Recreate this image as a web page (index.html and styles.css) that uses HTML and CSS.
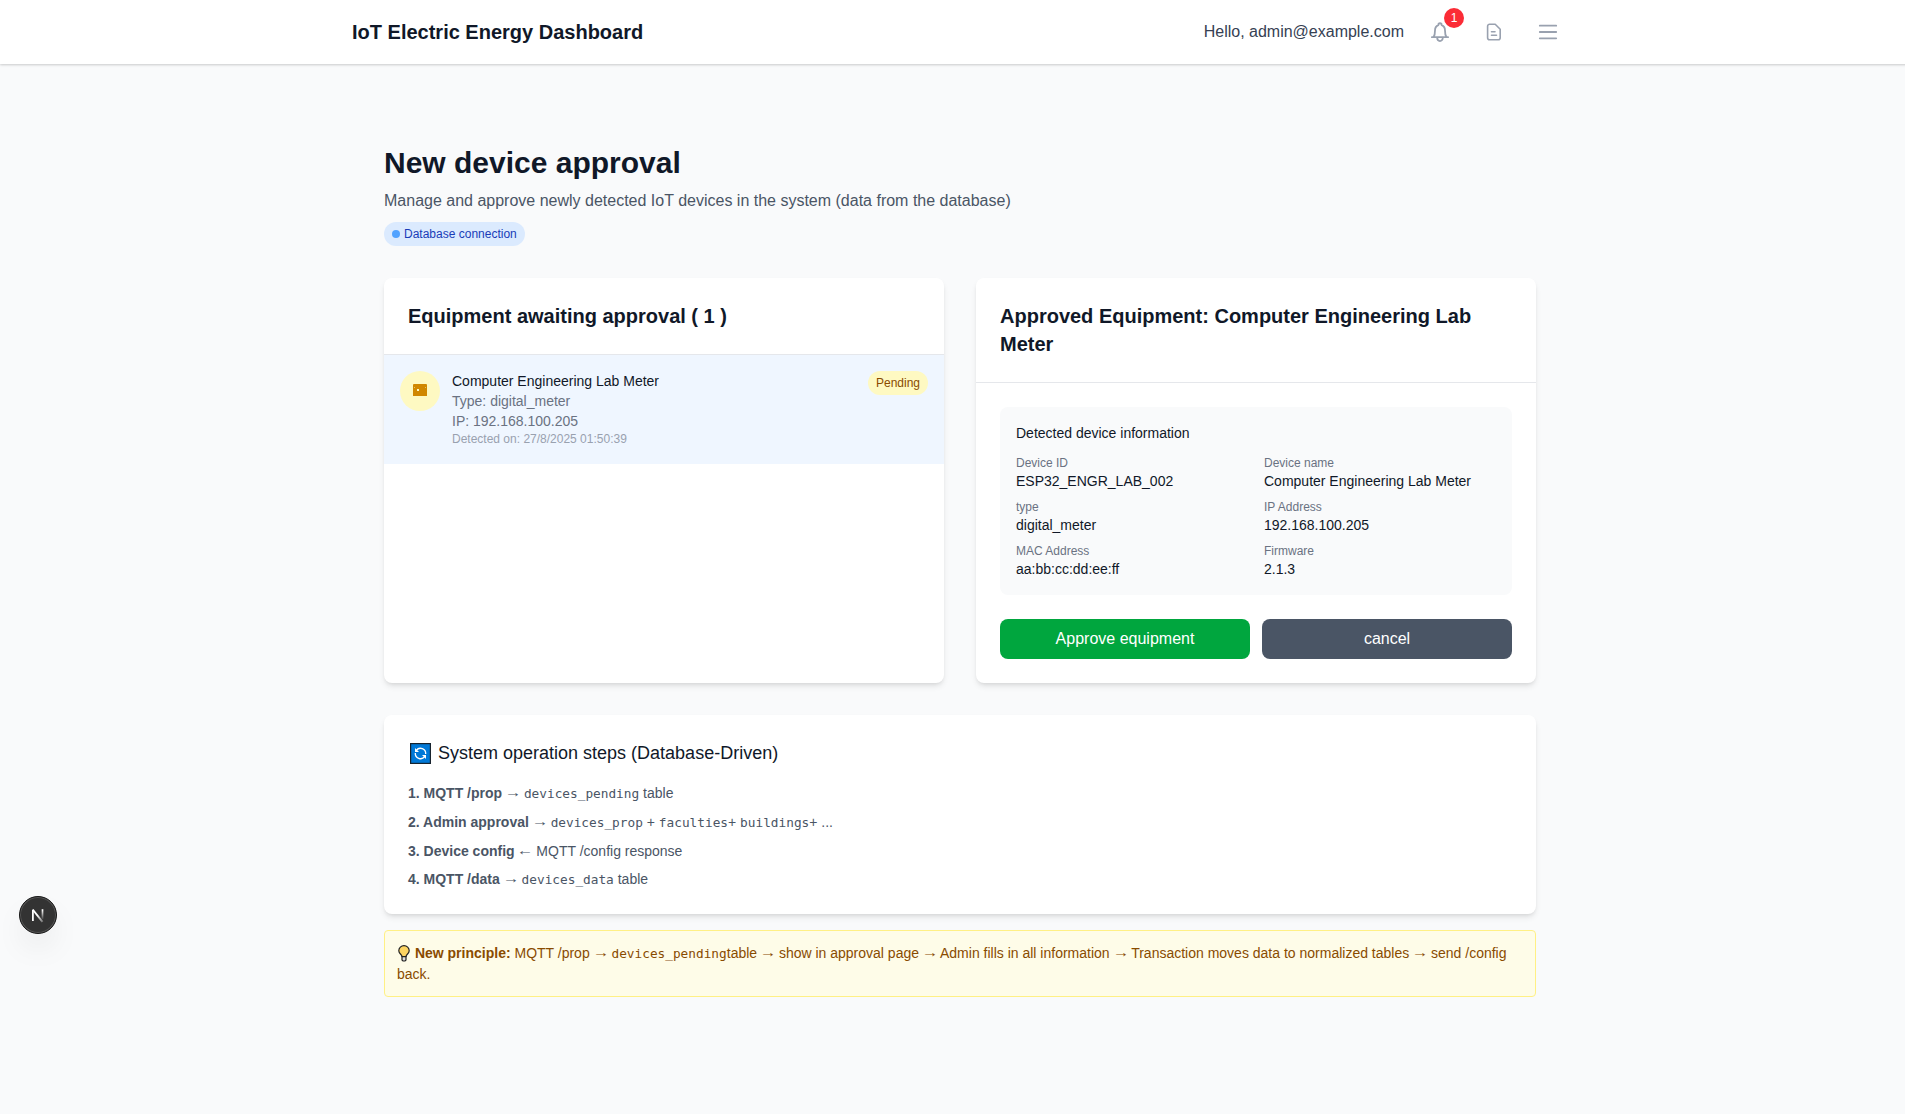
FILE: index.html
```html
<!DOCTYPE html>
<html lang="en">
<head>
<meta charset="utf-8">
<title>New device approval</title>
<link rel="stylesheet" href="styles.css">
</head>
<body>
<header class="topbar">
  <div class="topbar-inner">
    <h1 class="brand">IoT Electric Energy Dashboard</h1>
    <div class="topbar-right">
      <span class="hello">Hello, admin@example.com</span>
      <button class="icon-btn bell" aria-label="Notifications">
        <svg viewBox="0 0 20 20" width="20" height="20" fill="none" stroke="currentColor" stroke-width="1.8" stroke-linecap="round" stroke-linejoin="round"><path d="M1.900 15.200h16.200M3.600 15C4.800 13.200 5 11 5 8.500C5 6 6.300 4 8.300 3.200C8.300.6 11.700.6 11.700 3.200C13.700 4 15 6 15 8.500C15 11 15.200 13.200 16.400 15M7.200 15.800c0 4.300 5.600 4.300 5.600 0"/></svg>
        <span class="count">1</span>
      </button>
      <button class="icon-btn" aria-label="Reports">
        <svg viewBox="0 0 20 20" width="20" height="20" fill="none" stroke="currentColor" stroke-width="1.6" stroke-linecap="round" stroke-linejoin="round"><path d="M5.600 2.200h5.600l5 5v8.600a2 2 0 0 1-2 2H5.600a2 2 0 0 1-2-2V4.200a2 2 0 0 1 2-2zM7.500 9.800h3.500M7.500 13.300h5"/></svg>
      </button>
      <button class="icon-btn" aria-label="Menu">
        <svg viewBox="0 0 20 20" width="20" height="20" fill="none" stroke="currentColor" stroke-width="1.800" stroke-linecap="round"><path d="M1.800 3.700h16.400M1.800 10h16.400M1.800 16.300h16.400"/></svg>
      </button>
    </div>
  </div>
</header>
<main class="page">
  <section class="intro">
    <h2 class="title">New device approval</h2>
    <p class="subtitle">Manage and approve newly detected IoT devices in the system (data from the database)</p>
    <span class="db-badge"><i class="dot"></i>Database connection</span>
  </section>
  <div class="columns">
    <section class="card">
      <div class="card-head"><h3>Equipment awaiting approval ( 1 )</h3></div>
      <div class="device">
        <div class="device-icon"><svg viewBox="0 0 14 12" width="14" height="12"><rect width="14" height="12" fill="#d08700"/><path d="M4 5h2v2H4z" fill="#fef9c2"/><path d="M1 3h1v1H1zM12 3h1v1h-1zM0 0h1v.5H0zM13 0h1v.5h-1z" fill="#e9c25e"/></svg></div>
        <div class="device-text">
          <p class="device-name">Computer Engineering Lab Meter</p>
          <p class="device-meta">Type: digital_meter</p>
          <p class="device-meta">IP: 192.168.100.205</p>
          <p class="device-date">Detected on: 27/8/2025 01:50:39</p>
        </div>
        <span class="pending">Pending</span>
      </div>
    </section>
    <section class="card">
      <div class="card-head"><h3>Approved Equipment: Computer Engineering Lab Meter</h3></div>
      <div class="card-body">
        <div class="info">
          <h4>Detected device information</h4>
          <dl class="info-grid">
            <div><dt>Device ID</dt><dd>ESP32_ENGR_LAB_002</dd></div>
            <div><dt>Device name</dt><dd>Computer Engineering Lab Meter</dd></div>
            <div><dt>type</dt><dd>digital_meter</dd></div>
            <div><dt>IP Address</dt><dd>192.168.100.205</dd></div>
            <div><dt>MAC Address</dt><dd>aa:bb:cc:dd:ee:ff</dd></div>
            <div><dt>Firmware</dt><dd>2.1.3</dd></div>
          </dl>
        </div>
        <div class="actions">
          <button class="btn approve">Approve equipment</button>
          <button class="btn cancel">cancel</button>
        </div>
      </div>
    </section>
  </div>
  <section class="card steps">
    <h3><svg class="sync" viewBox="0 0 21 21" width="21" height="21"><rect x=".6" y=".6" width="19.800" height="19.800" fill="#0078d7" stroke="#17232e" stroke-width="1.200"/><g fill="none" stroke="#fff" stroke-width="1.300"><path d="M6.300 7.300A5.300 5.300 0 0 1 15.700 11M14.700 13.700A5.300 5.300 0 0 1 5.300 10"/></g><path d="M5 5v4h4zM16 16v-4h-4z" fill="#fff"/></svg>System operation steps (Database-Driven)</h3>
    <ol class="step-list">
      <li><b>1. MQTT /prop</b> <span class="arrow">→</span> <code>devices_pending</code> table</li>
      <li><b>2. Admin approval</b> <span class="arrow">→</span> <code>devices_prop</code> + <code>faculties</code>+ <code>buildings</code>+ ...</li>
      <li><b>3. Device config</b> <span class="arrow">←</span> MQTT /config response</li>
      <li><b>4. MQTT /data</b> <span class="arrow">→</span> <code>devices_data</code> table</li>
    </ol>
  </section>
  <p class="principle"><svg class="bulb" viewBox="0 0 12 17" width="12" height="17"><path d="M4 11.500C4 9.500.8 8.700.8 5.700a5.200 5 0 0 1 10.400 0C11.200 8.700 8 9.500 8 11.500z" fill="#fcd462" stroke="#222" stroke-width="1.200"/><path d="M4 11.700h4v3.300l-1 1H5l-1-1z" fill="#ddd" stroke="#222" stroke-width="1.200"/></svg> <b>New principle:</b> MQTT /prop <span class="arrow">→</span> <code>devices_pending</code>table <span class="arrow">→</span> show in approval page <span class="arrow">→</span> Admin fills in all information <span class="arrow">→</span> Transaction moves data to normalized tables <span class="arrow">→</span> send /config back.</p>
</main>
<div class="dev-badge"><svg viewBox="0 0 38 38" width="38" height="38" fill="none"><defs><linearGradient id="stem" x1="0" y1="14" x2="0" y2="24" gradientUnits="userSpaceOnUse"><stop stop-color="#fff"/><stop offset="1" stop-color="#fff" stop-opacity="0"/></linearGradient><linearGradient id="slant" x1="19" y1="19" x2="24" y2="26" gradientUnits="userSpaceOnUse"><stop stop-color="#fff"/><stop offset="1" stop-color="#fff" stop-opacity=".3"/></linearGradient></defs><path d="M13.900 25V14" stroke="#fff" stroke-width="1.800"/><path d="M13.700 13.500l9.800 12.300" stroke="url(#slant)" stroke-width="1.900"/><path d="M23.500 13.200v10" stroke="url(#stem)" stroke-width="1.700"/></svg></div>
</body>
</html>
```
FILE: styles.css
```css
* { box-sizing: border-box; margin: 0; padding: 0; }
html { overflow: hidden; }
body {
  width: 1920px;
  min-height: 1114px;
  background: #f9fafb;
  color: #101828;
  font: 16px/24px "Liberation Sans", Arial, sans-serif;
}
button { border: 0; background: none; font: inherit; color: inherit; }
.topbar {
  height: 64px;
  background: #fff;
  box-shadow: 0 1px 3px rgba(0, 0, 0, .1), 0 1px 2px rgba(0, 0, 0, .1);
}
.topbar-inner {
  width: 1216px;
  height: 64px;
  margin: 0 auto;
  padding-right: 1px;
  display: flex;
  align-items: center;
  justify-content: space-between;
}
.brand { font-size: 20px; line-height: 28px; }
.topbar-right { display: flex; align-items: center; gap: 16px; }
.hello { margin-right: 1px; color: #364153; }
.icon-btn { position: relative; width: 38px; height: 38px; display: flex; align-items: center; justify-content: center; color: #99a1af; }
.count {
  position: absolute;
  top: -5px;
  right: -5px;
  width: 20px;
  height: 20px;
  border-radius: 50%;
  background: #fb2c36;
  color: #fff;
  font-size: 12px;
  line-height: 20px;
  text-align: center;
}
.page { width: 1152px; margin: 0 auto; padding-top: 81px; }
.title { font-size: 30px; line-height: 36px; }
.subtitle { margin-top: 8px; color: #4a5565; }
.intro { margin-bottom: 32px; }
.db-badge {
  display: flex;
  width: fit-content;
  align-items: center;
  gap: 4px;
  margin-top: 9px;
  padding: 4px 8px;
  border-radius: 12px;
  background: #dbeafe;
  color: #193cb8;
  font-size: 12px;
  line-height: 16px;
}
.dot { width: 8px; height: 8px; border-radius: 50%; background: #51a2ff; }
.columns { display: grid; grid-template-columns: 1fr 1fr; gap: 32px; }
.card {
  overflow: hidden;
  border-radius: 8px;
  background: #fff;
  box-shadow: 0 4px 6px -1px rgba(0, 0, 0, .1), 0 2px 4px -2px rgba(0, 0, 0, .1);
}
.card-head { padding: 24px; border-bottom: 1px solid #e5e7eb; }
.card-head h3 { font-size: 20px; line-height: 28px; }
.device { display: flex; align-items: flex-start; padding: 16px 16px 17px; background: #eff6ff; }
.device-icon {
  display: flex;
  align-items: center;
  justify-content: center;
  width: 40px;
  height: 40px;
  padding-bottom: 2px;
  border-radius: 50%;
  background: #fef9c2;
}
.device-text { flex: 1; margin-left: 12px; font-size: 14px; line-height: 20px; }
.device-meta { color: #6a7282; }
.device-date { color: #99a1af; font-size: 12px; line-height: 16px; }
.pending {
  padding: 4px 8px;
  border-radius: 12px;
  background: #fef9c2;
  color: #894b00;
  font-size: 12px;
  line-height: 16px;
}
.card-body { padding: 24px; }
.info { padding: 16px; border-radius: 8px; background: #f9fafb; }
.info h4 { margin-bottom: 12px; font-size: 14px; line-height: 20px; font-weight: 400; }
.info-grid { display: grid; grid-template-columns: 1fr 1fr; gap: 8px 16px; font-size: 14px; line-height: 20px; }
.info-grid dt { color: #6a7282; font-size: 12px; line-height: 16px; }
.actions { display: flex; gap: 12px; margin-top: 24px; }
.btn { flex: 1; height: 40px; border-radius: 8px; color: #fff; }
.approve { background: #00a63e; }
.cancel { background: #4a5565; }
.steps { margin-top: 32px; padding: 24px; }
.steps h3 { display: flex; align-items: center; gap: 7px; margin-bottom: 16px; font-size: 18px; line-height: 28px; font-weight: 400; }
.sync { margin-left: 2px; }
.step-list { display: grid; gap: 8px; list-style: none; color: #4a5565; font-size: 14px; line-height: 20px; }
code { font: 12.78px/21px "DejaVu Sans Mono", monospace; }
.arrow { display: inline-block; transform: translateY(-1px) scaleX(1.18); }
.principle {
  margin-top: 16px;
  padding: 12px;
  border: 1px solid #fff085;
  border-radius: 4px;
  background: #fefce8;
  color: #894b00;
  font-size: 14px;
  line-height: 20px;
}
.bulb { margin: 0 1px; vertical-align: -4px; }
.dev-badge {
  position: fixed;
  left: 19px;
  top: 896px;
  width: 38px;
  height: 38px;
  border-radius: 50%;
  background: #333;
  border: 1px solid #171717;
  box-shadow: inset 0 0 0 1px #555, 0 16px 32px -8px rgba(0, 0, 0, .15);
}
.dev-badge svg { display: block; margin: -1px; }
```
